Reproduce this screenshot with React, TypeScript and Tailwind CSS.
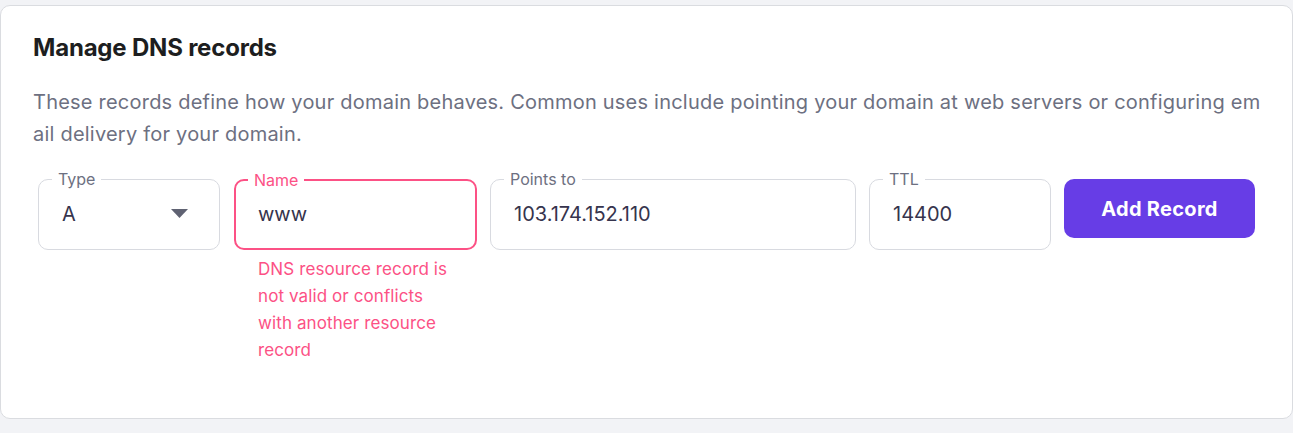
import { useState } from "react";

type FieldProps = {
  label: string;
  value: string;
  width: string;
  error?: boolean;
  select?: boolean;
};

function Field({ label, value, width, error = false, select = false }: FieldProps) {
  return (
    <div
      className={`relative h-[71px] shrink-0 rounded-[10px] bg-white ${width} ${
        error ? "border-2 border-[#fc5185]" : "border border-[#d8dae0]"
      }`}
    >
      <span
        className={`absolute -top-[12px] bg-white px-[6px] text-[16px] leading-[22px] ${
          error ? "left-[12px] text-[#fc5185]" : "left-[13px] text-[#6d7081]"
        }`}
      >
        {label}
      </span>
      <div
        className={`flex h-full items-center justify-between pb-[2px] text-[20px] text-[#36344d] ${
          error ? "pl-[22px] pr-[20px]" : "pl-[23px] pr-[31px]"
        }`}
      >
        <span>{value}</span>
        {select && (
          <svg width="17" height="9" viewBox="0 0 17 9">
            <path d="M0 0h17L8.5 9z" fill="#5f6272" />
          </svg>
        )}
      </div>
    </div>
  );
}

export default function App() {
  const [name] = useState("www");

  return (
    <div
      className="min-h-[433px] bg-[#f2f3f6] pt-[5px]"
      style={{ fontFamily: "Inter, 'Liberation Sans', sans-serif" }}
    >
      <div className="h-[414px] rounded-[10px] border border-[#dadce0] bg-white pl-[32px] pr-[24px] pt-[26px]">
        <h2 className="text-[24px] font-bold leading-[32px] tracking-[-0.2px] text-[#1d1e20]">
          Manage DNS records
        </h2>
        <p className="mt-[22px] text-[20px] leading-[32px] tracking-[0.22px] text-[#6d7081]">
          <span className="block whitespace-nowrap">
            These records define how your domain behaves. Common uses include pointing your domain at web servers or configuring em
          </span>
          <span className="block whitespace-nowrap">ail delivery for your domain.</span>
        </p>

        <div className="ml-[5px] mt-[29px] flex items-start gap-[13px]">
          <Field label="Type" value="A" width="w-[182px]" select />
          <div className="ml-[1px] shrink-0">
            <Field label="Name" value={name} width="w-[243px]" error />
            <div className="mt-[6px] pl-[24px] text-[17px] leading-[27px] tracking-[0.1px] text-[#fc5185]">
              <span className="block">DNS resource record is</span>
              <span className="block">not valid or conflicts</span>
              <span className="block">with another resource</span>
              <span className="block">record</span>
            </div>
          </div>
          <Field label="Points to" value="103.174.152.110" width="w-[366px]" />
          <Field label="TTL" value="14400" width="w-[182px]" />
          <button className="h-[59px] w-[191px] shrink-0 rounded-[10px] bg-[#673de6] text-[20px] font-bold tracking-[0.3px] text-white">
            Add Record
          </button>
        </div>
      </div>
    </div>
  );
}
